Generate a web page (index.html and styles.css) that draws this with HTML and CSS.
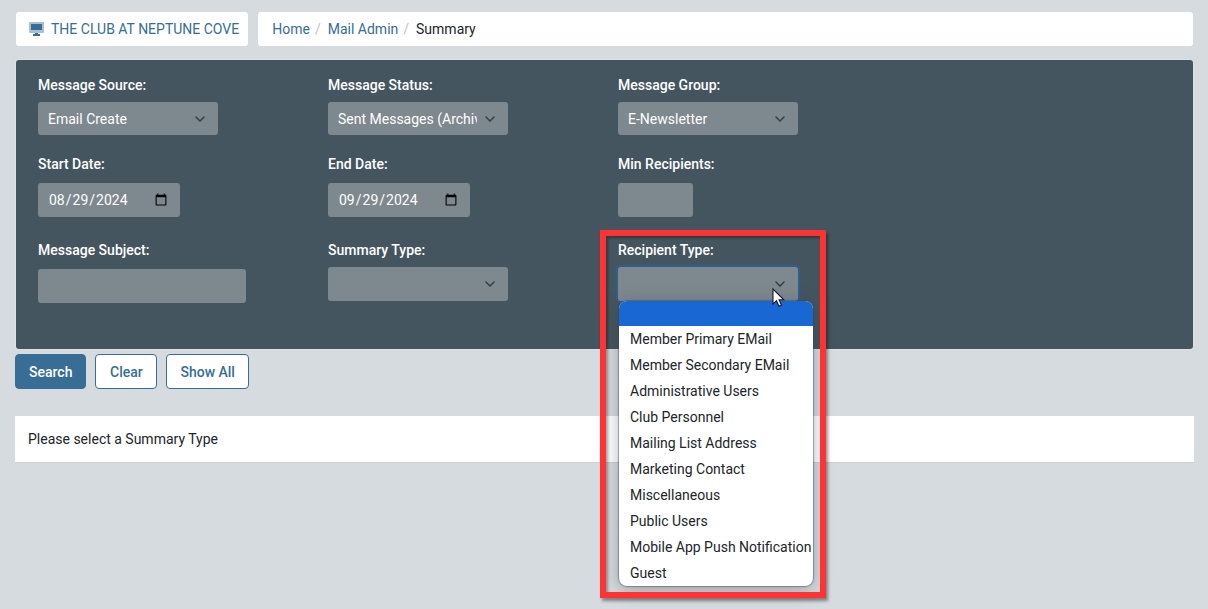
FILE: index.html
```html
<!DOCTYPE html>
<html lang="en">
<head>
<meta charset="utf-8">
<title>Mail Admin Summary</title>
<link rel="stylesheet" href="styles.css">
</head>
<body>
<header class="topbar">
  <a class="club" href="#">
    <svg class="club-icon" viewBox="0 0 16 14" aria-hidden="true">
      <rect width="15" height="11" rx="1" fill="#a9c0d1"/>
      <rect x="2" y="2" width="11" height="6" fill="#386d96"/>
      <path d="M6 11h3v1h2v2H4v-2h2z" fill="#386d96"/>
    </svg>
    <span>THE CLUB AT NEPTUNE COVE</span>
  </a>
  <nav class="crumbs" aria-label="Breadcrumb">
    <a href="#">Home</a><span class="slash">/</span>
    <a href="#">Mail Admin</a><span class="slash">/</span>
    <span>Summary</span>
  </nav>
</header>
<main>
  <form class="search">
    <div class="panel">
      <div class="field">
        <label for="source">Message Source:</label>
        <select id="source"><option>Email Create</option></select>
      </div>
      <div class="field">
        <label for="status">Message Status:</label>
        <select id="status"><option>Sent Messages (Archived)</option></select>
      </div>
      <div class="field">
        <label for="group">Message Group:</label>
        <select id="group"><option>E-Newsletter</option></select>
      </div>
      <div class="field field-input row-start">
        <label for="start">Start Date:</label>
        <input class="date" id="start" type="date" value="2024-08-29">
      </div>
      <div class="field field-input">
        <label for="end">End Date:</label>
        <input class="date" id="end" type="date" value="2024-09-29">
      </div>
      <div class="field field-input">
        <label for="min">Min Recipients:</label>
        <input class="short" id="min" type="text">
      </div>
      <div class="field field-input row-start">
        <label for="subject">Message Subject:</label>
        <input class="long" id="subject" type="text">
      </div>
      <div class="field">
        <label for="summary">Summary Type:</label>
        <select class="tall" id="summary"><option></option></select>
      </div>
      <div class="field recipient">
        <label for="recipient">Recipient Type:</label>
        <select class="tall open" id="recipient"><option></option></select>
        <ul class="menu" role="listbox" aria-label="Recipient Type">
          <li class="selected" role="option" aria-selected="true"></li>
          <li role="option">Member Primary EMail</li>
          <li role="option">Member Secondary EMail</li>
          <li role="option">Administrative Users</li>
          <li role="option">Club Personnel</li>
          <li role="option">Mailing List Address</li>
          <li role="option">Marketing Contact</li>
          <li role="option">Miscellaneous</li>
          <li role="option">Public Users</li>
          <li role="option">Mobile App Push Notification</li>
          <li role="option">Guest</li>
        </ul>
        <div class="highlight"></div>
        <svg class="cursor" viewBox="0 0 13 20" aria-hidden="true">
          <path d="M1 1v15l3.500-3.300 2.400 5.600 2.600-1.100-2.400-5.400h4.700z" fill="#fff" stroke="#15182b" stroke-width="1.100"/>
        </svg>
      </div>
    </div>
    <div class="actions">
      <button class="btn primary" type="button">Search</button>
      <button class="btn" type="button">Clear</button>
      <button class="btn" type="button">Show All</button>
    </div>
  </form>
  <p class="notice">Please select a Summary Type</p>
</main>
</body>
</html>
```
FILE: styles.css
```css
* { box-sizing: border-box; }

body {
  min-height: 100vh;
  margin: 0;
  padding: 12px 15px 0 16px;
  background: #d6dbdf;
  color: #212529;
  font: 14px/20px Roboto, "Liberation Sans", sans-serif;
}

a { color: #386d96; text-decoration: none; }

.topbar { display: flex; gap: 10px; margin-bottom: 14px; }

.club, .crumbs {
  display: flex;
  align-items: center;
  height: 34px;
  background: #fff;
  border-radius: 3px;
}

.club { gap: 6px; padding: 0 9px 0 13px; white-space: nowrap; }
.club-icon { width: 16px; height: 14px; }
.crumbs { flex: 1; padding: 0 14px; }
.slash { margin: 0 7px 0 5px; color: #bcc2c7; }

.panel {
  display: grid;
  grid-template-columns: repeat(4, 1fr);
  padding: 15px 10px 23px 7px;
  background: #45555f;
  border-radius: 3px;
  box-shadow: 0 0 0 1px #dde1e4;
}

.field {
  position: relative;
  display: flex;
  flex-direction: column;
  align-items: flex-start;
  gap: 7px;
  padding: 0 0 19px 15px;
}

.field-input { gap: 9px; padding-bottom: 23px; }
.row-start { grid-column-start: 1; }

label { color: #fff; font-weight: 500; }

select, input {
  height: 34px;
  border: 0;
  border-radius: 3px;
  background: #7e888f;
  color: #fff;
  font: inherit;
}

select {
  appearance: none;
  width: 180px;
  height: 33px;
  padding: 0 31px 0 10px;
  background: #7e888f url("data:image/svg+xml,%3Csvg xmlns='http://www.w3.org/2000/svg' viewBox='0 0 10 6'%3E%3Cpath d='M1 1l4 4 4-4' fill='none' stroke='%23343e46' stroke-width='1.500' stroke-linecap='round'/%3E%3C/svg%3E") no-repeat right 13px center / 10px 6px;
}

.tall { height: 34px; }

input { padding: 0 10px; }
.date { width: 142px; }
.short { width: 75px; }
.long { width: 208px; }
.open { box-shadow: 0 0 0 2px #305f8d; outline: 0; }

.menu {
  position: absolute;
  top: 61px;
  left: 16px;
  width: 194px;
  margin: 0;
  padding: 0;
  overflow: hidden;
  list-style: none;
  background: #fff;
  border-radius: 8px;
  box-shadow: 0 0 1px 1px rgba(60, 70, 78, .45), 0 4px 18px rgba(40, 50, 58, .35);
}

.menu li { height: 26px; padding: 0 0 0 11px; line-height: 26px; white-space: nowrap; }
.menu .selected { height: 25px; background: #1967d2; }

.highlight {
  position: absolute;
  top: -10px;
  left: -3px;
  width: 226px;
  height: 368px;
  border: 6px solid #ff3333;
  box-shadow: 2px 3px 3px rgba(0, 0, 0, .4), inset 2px 2px 3px rgba(0, 0, 0, .35);
  pointer-events: none;
}

.cursor { position: absolute; top: 48px; left: 169px; width: 13px; height: 20px; }

.actions { display: flex; gap: 9px; margin: 5px 0 27px -1px; }

.btn {
  min-width: 62px;
  height: 35px;
  padding: 0 13px;
  border: 1px solid #386d96;
  border-radius: 4px;
  background: #fff;
  color: #386d96;
  font: inherit;
  font-weight: 500;
}

.primary { background: #386d96; color: #fff; }

.notice {
  margin: 0 -1px;
  padding: 13px;
  background: #fff;
  border-bottom: 1px solid #cbd1d5;
}
```
